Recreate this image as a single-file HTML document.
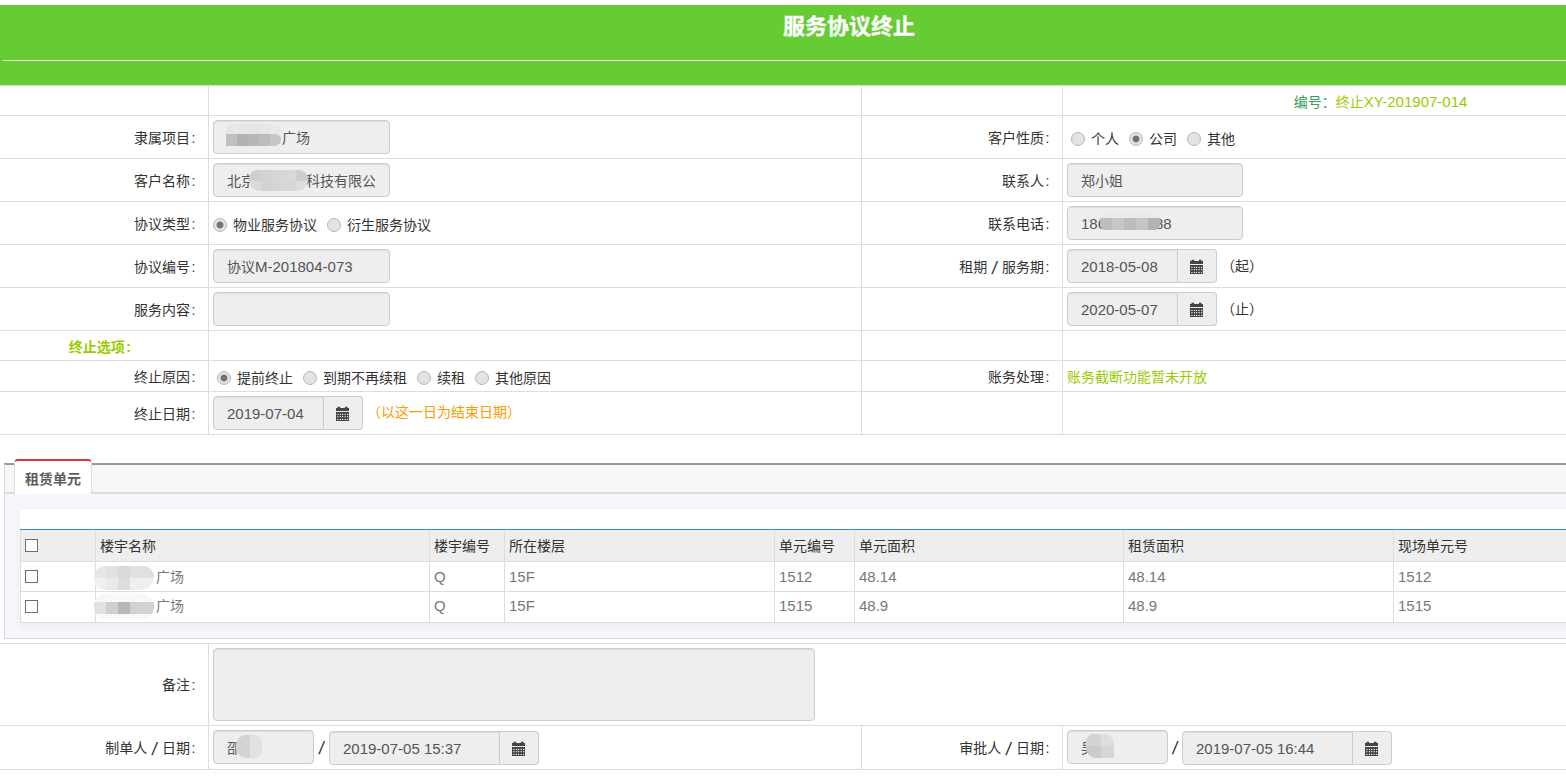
<!DOCTYPE html>
<html lang="zh-CN">
<head>
<meta charset="utf-8">
<title>服务协议终止</title>
<style>
*{box-sizing:border-box;}
html,body{margin:0;padding:0;}
html{overflow:hidden;background:#fff;width:1566px;height:782px;}
body{width:1566px;height:782px;position:relative;overflow:hidden;background:#fff;
  font-family:"Liberation Sans","Noto Sans CJK SC",sans-serif;font-size:14px;line-height:20px;color:#333;}
.page{position:absolute;left:0;top:0;width:1566px;height:782px;overflow:hidden;}
.page>.in{position:absolute;left:0;top:0;width:1698px;height:782px;}
/* header */
.hd{position:absolute;left:0;top:5px;width:1698px;height:80px;background:#66cc33;}
.hd h1{-webkit-text-stroke:0.3px #fff;margin:0;position:absolute;left:0;top:7px;width:100%;text-align:center;font-size:22px;line-height:30px;font-weight:bold;color:#fff;}
.hd .ln{position:absolute;left:3px;right:3px;top:55px;height:1px;background:#eee;}
/* form tables */
table.ft{position:absolute;left:0;border-collapse:separate;border-spacing:0;table-layout:fixed;width:1698px;}
table.ft td{border-top:1px solid #ddd;border-right:1px solid #ddd;padding:4px;vertical-align:middle;height:43px;}
table.ft td:last-child{border-right:0;}
table.ft tr:last-child td{border-bottom:1px solid #ddd;}
table.ft td.lb{text-align:right;padding:5px 12.5px 4px 0;word-spacing:1px;}
table.ft td.lb i{font-style:normal;margin-left:1.5px;}
table.ft tr.s td{height:30px;}
table.ft tr.b td{height:45px;vertical-align:top;}
table.ft tr.b td.lb{vertical-align:middle;}
table.ft tr.b .ig{position:relative;top:1px;}
.ls{display:inline-block;font-size:18px;line-height:14px;position:relative;top:2px;transform:skewX(-8deg);}
table.ft td.rc{padding:7px 4px 3px;}
table.ft td.tc{padding-top:6px;}
.ip{display:inline-block;vertical-align:middle;height:34px;padding:7px 12px 5px 13px;border:1px solid #ccc;border-radius:4px;background:#eee;box-shadow:inset 0 1px 1px rgba(0,0,0,.075);color:#555;font-size:14px;line-height:20px;white-space:nowrap;overflow:hidden;}
.ig{display:inline-flex;vertical-align:middle;height:34px;}
.ig .ip{border-radius:4px 0 0 4px;}
.ig .ad{width:39px;height:34px;border:1px solid #ccc;border-left:0;border-radius:0 4px 4px 0;background:#eee;display:flex;align-items:center;justify-content:center;}
.ig .ad svg{display:block;margin-top:1px;}
.rd{display:inline-block;vertical-align:top;margin-top:3px;width:14px;height:14px;margin-right:6px;border-radius:50%;border:1px solid #b6b6b6;background:#e3e3e3;position:relative;}
.rd.on{background:radial-gradient(circle at 50% 50%,#747474 0,#747474 3px,#e3e3e3 3.9px);}
.rl{display:inline-block;vertical-align:middle;margin-right:10px;height:20px;line-height:20px;}
.rc .rl{vertical-align:top;}
.n,.ip.n,.gr td.n{font-size:15px;}
.sl{display:inline-block;vertical-align:top;margin-top:8px;width:15px;text-align:center;font-size:18px;line-height:20px;transform:skewX(-8deg);}
.pr{margin-left:4px;}
.g1{color:#35a064;}
.g2{color:#99cc00;}
.or{color:#ff9900;position:relative;top:-1px;}
.gap{display:inline-block;height:1px;vertical-align:middle;}
.cl{display:block;overflow:hidden;white-space:nowrap;}
.mz{position:absolute;overflow:hidden;}
.mz b{display:block;}
/* tabs */
.tb{position:absolute;left:4px;top:463px;width:1690px;height:176px;border:1px solid #ddd;border-top:2px solid #999;background:#f6f7fb;}
.tb .st{position:absolute;left:0;top:0;right:0;height:29px;background:#f7f7f7;border-bottom:2px solid #ddd;}
.tb .tab{position:absolute;left:9px;top:-6px;width:78px;height:35px;background:#fff;border:1px solid #ddd;border-top:2px solid #e23232;border-bottom:0;border-radius:4px 4px 0 0;text-align:center;font-weight:bold;color:#5c5c5c;line-height:20px;padding-top:8px;}
.gr{position:absolute;left:15px;top:44px;width:1658px;height:114px;background:#fff;box-shadow:0 3px 8px 1px rgba(0,0,0,.04);}
.gr table{position:absolute;left:0;top:20px;width:1658px;border-collapse:separate;border-spacing:0;table-layout:fixed;border-top:1px solid #3a87d2;}
.gr td,.gr th{height:30px;border-left:1px solid #ddd;border-bottom:1px solid #ddd;padding:0 0 0 4px;text-align:left;font-weight:normal;vertical-align:middle;color:#777;white-space:nowrap;overflow:hidden;}
.gr th{background:#eee;color:#333;height:32px;}
.gr tr.l td{height:31px;padding-bottom:2px;}
.cb{display:block;width:13px;height:13px;border:1px solid #6e6e6e;background:#fff;}
</style>
</head>
<body>
<div class="page"><div class="in">
<div class="hd"><h1>服务协议终止</h1><div class="ln"></div></div>

<table class="ft" style="top:85px">
<colgroup><col style="width:209px"><col style="width:653px"><col style="width:201px"><col></colgroup>
<tr class="s"><td></td><td></td><td></td><td style="text-align:center;padding:6px 4px 3px"><span class="g1">编号：</span><span class="g2">终止<span class="n">XY-201907-014</span></span></td></tr>
<tr><td class="lb">隶属项目<i>:</i></td><td><span class="ip" style="width:177px"><span class="gap" style="width:55px"></span>广场</span></td><td class="lb">客户性质<i>:</i></td><td class="rc"><span class="rd" style="margin-left:4px"></span><span class="rl">个人</span><span class="rd on"></span><span class="rl">公司</span><span class="rd"></span><span class="rl">其他</span></td></tr>
<tr><td class="lb">客户名称<i>:</i></td><td><span class="ip" style="width:177px"><span class="cl" style="width:148px">北京<span class="gap" style="width:51px"></span>科技有限公司</span></span></td><td class="lb">联系人<i>:</i></td><td><span class="ip" style="width:176px">郑小姐</span></td></tr>
<tr><td class="lb">协议类型<i>:</i></td><td class="rc"><span class="rd on"></span><span class="rl">物业服务协议</span><span class="rd"></span><span class="rl">衍生服务协议</span></td><td class="lb">联系电话<i>:</i></td><td><span class="ip n" style="width:176px">186<span class="gap" style="width:49px"></span>88</span></td></tr>
<tr><td class="lb">协议编号<i>:</i></td><td><span class="ip" style="width:177px">协议<span class="n">M-201804-073</span></span></td><td class="lb">租期 <span class="ls">/</span> 服务期<i>:</i></td><td><span class="ig"><span class="ip n" style="width:111px">2018-05-08</span><span class="ad"><svg width="14" height="15" viewBox="0 0 14 15"><path fill="#444" d="M0 2h13v3H0z M1.5 0.8h2.6v1.4H1.5z M8.9 0.8h2.6v1.4H8.9z M0 5.9h13V15H0z"/><g fill="#f4f4f4"><rect x="1.3" y="7.9" width="1.2" height="1.1"/><rect x="3.9" y="7.9" width="1.2" height="1.1"/><rect x="6.0" y="7.9" width="1.2" height="1.1"/><rect x="8.6" y="7.9" width="1.2" height="1.1"/><rect x="11.0" y="7.9" width="1.2" height="1.1"/><rect x="1.3" y="10.1" width="1.2" height="1.1"/><rect x="3.9" y="10.1" width="1.2" height="1.1"/><rect x="6.0" y="10.1" width="1.2" height="1.1"/><rect x="8.6" y="10.1" width="1.2" height="1.1"/><rect x="11.0" y="10.1" width="1.2" height="1.1"/><rect x="1.3" y="12.9" width="1.2" height="1.1"/><rect x="3.9" y="12.9" width="1.2" height="1.1"/><rect x="6.0" y="12.9" width="1.2" height="1.1"/><rect x="8.6" y="12.9" width="1.2" height="1.1"/><rect x="11.0" y="12.9" width="1.2" height="1.1"/></g></svg></span></span><span class="rl pr">（起）</span></td></tr>
<tr><td class="lb">服务内容<i>:</i></td><td><span class="ip" style="width:177px"></span></td><td></td><td><span class="ig"><span class="ip n" style="width:111px">2020-05-07</span><span class="ad"><svg width="14" height="15" viewBox="0 0 14 15"><path fill="#444" d="M0 2h13v3H0z M1.5 0.8h2.6v1.4H1.5z M8.9 0.8h2.6v1.4H8.9z M0 5.9h13V15H0z"/><g fill="#f4f4f4"><rect x="1.3" y="7.9" width="1.2" height="1.1"/><rect x="3.9" y="7.9" width="1.2" height="1.1"/><rect x="6.0" y="7.9" width="1.2" height="1.1"/><rect x="8.6" y="7.9" width="1.2" height="1.1"/><rect x="11.0" y="7.9" width="1.2" height="1.1"/><rect x="1.3" y="10.1" width="1.2" height="1.1"/><rect x="3.9" y="10.1" width="1.2" height="1.1"/><rect x="6.0" y="10.1" width="1.2" height="1.1"/><rect x="8.6" y="10.1" width="1.2" height="1.1"/><rect x="11.0" y="10.1" width="1.2" height="1.1"/><rect x="1.3" y="12.9" width="1.2" height="1.1"/><rect x="3.9" y="12.9" width="1.2" height="1.1"/><rect x="6.0" y="12.9" width="1.2" height="1.1"/><rect x="8.6" y="12.9" width="1.2" height="1.1"/><rect x="11.0" y="12.9" width="1.2" height="1.1"/></g></svg></span></span><span class="rl pr">（止）</span></td></tr>
<tr class="s"><td class="lb" style="padding:6px 77px 3px 0"><b class="g2">终止选项<i>:</i></b></td><td></td><td></td><td></td></tr>
<tr class="s" style="height:31px"><td class="lb" style="height:31px">终止原因<i>:</i></td><td class="rc"><span class="rd on" style="margin-left:4px"></span><span class="rl">提前终止</span><span class="rd"></span><span class="rl">到期不再续租</span><span class="rd"></span><span class="rl">续租</span><span class="rd"></span><span class="rl">其他原因</span></td><td class="lb">账务处理<i>:</i></td><td class="tc"><span class="g2">账务截断功能暂未开放</span></td></tr>
<tr><td class="lb">终止日期<i>:</i></td><td><span class="ig"><span class="ip n" style="width:111px">2019-07-04</span><span class="ad"><svg width="14" height="15" viewBox="0 0 14 15"><path fill="#444" d="M0 2h13v3H0z M1.5 0.8h2.6v1.4H1.5z M8.9 0.8h2.6v1.4H8.9z M0 5.9h13V15H0z"/><g fill="#f4f4f4"><rect x="1.3" y="7.9" width="1.2" height="1.1"/><rect x="3.9" y="7.9" width="1.2" height="1.1"/><rect x="6.0" y="7.9" width="1.2" height="1.1"/><rect x="8.6" y="7.9" width="1.2" height="1.1"/><rect x="11.0" y="7.9" width="1.2" height="1.1"/><rect x="1.3" y="10.1" width="1.2" height="1.1"/><rect x="3.9" y="10.1" width="1.2" height="1.1"/><rect x="6.0" y="10.1" width="1.2" height="1.1"/><rect x="8.6" y="10.1" width="1.2" height="1.1"/><rect x="11.0" y="10.1" width="1.2" height="1.1"/><rect x="1.3" y="12.9" width="1.2" height="1.1"/><rect x="3.9" y="12.9" width="1.2" height="1.1"/><rect x="6.0" y="12.9" width="1.2" height="1.1"/><rect x="8.6" y="12.9" width="1.2" height="1.1"/><rect x="11.0" y="12.9" width="1.2" height="1.1"/></g></svg></span></span><span class="rl pr or">（以这一日为结束日期）</span></td><td></td><td></td></tr>
</table>

<div class="tb">
  <div class="st"></div>
  <div class="tab">租赁单元</div>
  <div class="gr">
    <table>
      <colgroup><col style="width:75px"><col style="width:334px"><col style="width:75px"><col style="width:270px"><col style="width:80px"><col style="width:269px"><col style="width:270px"><col></colgroup>
      <tr><th><span class="cb"></span></th><th>楼宇名称</th><th>楼宇编号</th><th>所在楼层</th><th>单元编号</th><th>单元面积</th><th>租赁面积</th><th>现场单元号</th></tr>
      <tr><td><span class="cb"></span></td><td><span class="gap" style="width:56px"></span>广场</td><td class="n">Q</td><td class="n">15F</td><td class="n">1512</td><td class="n">48.14</td><td class="n">48.14</td><td class="n">1512</td></tr>
      <tr class="l"><td><span class="cb"></span></td><td><span class="gap" style="width:56px"></span>广场</td><td class="n">Q</td><td class="n">15F</td><td class="n">1515</td><td class="n">48.9</td><td class="n">48.9</td><td class="n">1515</td></tr>
    </table>
  </div>
</div>

<table class="ft" style="top:643px">
<colgroup><col style="width:209px"><col style="width:653px"><col style="width:201px"><col></colgroup>
<tr><td class="lb" style="height:82px">备注<i>:</i></td><td colspan="3"><span class="ip" style="width:602px;height:73px;display:block"></span></td></tr>
<tr class="b"><td class="lb">制单人 <span class="ls">/</span> 日期<i>:</i></td><td><span class="ip" style="width:101px">邵</span><span class="sl">/</span><span class="ig"><span class="ip n" style="width:171px">2019-07-05 15:37</span><span class="ad"><svg width="14" height="15" viewBox="0 0 14 15"><path fill="#444" d="M0 2h13v3H0z M1.5 0.8h2.6v1.4H1.5z M8.9 0.8h2.6v1.4H8.9z M0 5.9h13V15H0z"/><g fill="#f4f4f4"><rect x="1.3" y="7.9" width="1.2" height="1.1"/><rect x="3.9" y="7.9" width="1.2" height="1.1"/><rect x="6.0" y="7.9" width="1.2" height="1.1"/><rect x="8.6" y="7.9" width="1.2" height="1.1"/><rect x="11.0" y="7.9" width="1.2" height="1.1"/><rect x="1.3" y="10.1" width="1.2" height="1.1"/><rect x="3.9" y="10.1" width="1.2" height="1.1"/><rect x="6.0" y="10.1" width="1.2" height="1.1"/><rect x="8.6" y="10.1" width="1.2" height="1.1"/><rect x="11.0" y="10.1" width="1.2" height="1.1"/><rect x="1.3" y="12.9" width="1.2" height="1.1"/><rect x="3.9" y="12.9" width="1.2" height="1.1"/><rect x="6.0" y="12.9" width="1.2" height="1.1"/><rect x="8.6" y="12.9" width="1.2" height="1.1"/><rect x="11.0" y="12.9" width="1.2" height="1.1"/></g></svg></span></span></td><td class="lb">审批人 <span class="ls">/</span> 日期<i>:</i></td><td><span class="ip" style="width:101px">吴</span><span class="sl" style="width:14px">/</span><span class="ig"><span class="ip n" style="width:171px">2019-07-05 16:44</span><span class="ad"><svg width="14" height="15" viewBox="0 0 14 15"><path fill="#444" d="M0 2h13v3H0z M1.5 0.8h2.6v1.4H1.5z M8.9 0.8h2.6v1.4H8.9z M0 5.9h13V15H0z"/><g fill="#f4f4f4"><rect x="1.3" y="7.9" width="1.2" height="1.1"/><rect x="3.9" y="7.9" width="1.2" height="1.1"/><rect x="6.0" y="7.9" width="1.2" height="1.1"/><rect x="8.6" y="7.9" width="1.2" height="1.1"/><rect x="11.0" y="7.9" width="1.2" height="1.1"/><rect x="1.3" y="10.1" width="1.2" height="1.1"/><rect x="3.9" y="10.1" width="1.2" height="1.1"/><rect x="6.0" y="10.1" width="1.2" height="1.1"/><rect x="8.6" y="10.1" width="1.2" height="1.1"/><rect x="11.0" y="10.1" width="1.2" height="1.1"/><rect x="1.3" y="12.9" width="1.2" height="1.1"/><rect x="3.9" y="12.9" width="1.2" height="1.1"/><rect x="6.0" y="12.9" width="1.2" height="1.1"/><rect x="8.6" y="12.9" width="1.2" height="1.1"/><rect x="11.0" y="12.9" width="1.2" height="1.1"/></g></svg></span></span></td></tr>
</table>
<!-- privacy mosaic patches that are part of the screenshot -->
<div class="mz" style="left:226px;top:124px;width:56px;height:10px;border-radius:14px 26px 0 0"><b style="height:10px;background:linear-gradient(90deg,#e7e7e7 0px,#e7e7e7 11px,#e5e6e6 11px,#e5e6e6 22px,#e4e5e5 22px,#e4e5e5 34px,#e6e7e7 34px,#e6e7e7 45px,#e9e9e9 45px,#e9e9e9 56px)"></b></div>
<div class="mz" style="left:226px;top:134px;width:55px;height:12px;border-radius:0 6px 8px 0"><b style="height:12px;background:linear-gradient(90deg,#c2c0be 0px,#c2c0be 11px,#b1b1b1 11px,#b1b1b1 22px,#b5b6b6 22px,#b5b6b6 33px,#bcbcbc 33px,#bcbcbc 44px,#c8c5c3 44px,#c8c5c3 55px)"></b></div>
<div class="mz" style="left:249px;top:170px;width:59px;height:21px;border-radius:9px 10px 12px 12px"><b style="height:11px;background:linear-gradient(90deg,#d0cfcd 0px,#d0cfcd 12px,#d2d3d5 12px,#d2d3d5 24px,#d6d6d6 24px,#d6d6d6 35px,#d7d8d8 35px,#d7d8d8 47px,#cecdcc 47px,#cecdcc 59px)"></b><b style="height:10px;background:linear-gradient(90deg,#dadad9 0px,#dadad9 12px,#d2d3d5 12px,#d2d3d5 24px,#d6d6d6 24px,#d6d6d6 35px,#d6d6d6 35px,#d6d6d6 47px,#dcdcdc 47px,#dcdcdc 59px)"></b></div>
<div class="mz" style="left:1100px;top:212px;width:58px;height:6px;border-radius:14px 14px 0 0"><b style="height:6px;background:#ebebeb"></b></div>
<div class="mz" style="left:1100px;top:218px;width:60px;height:12px;border-radius:0 0 5px 5px"><b style="height:12px;background:linear-gradient(90deg,#bcbdbd 0px,#bcbdbd 12px,#c9c7c6 12px,#c9c7c6 24px,#bbbcbc 24px,#bbbcbc 36px,#c6c5c3 36px,#c6c5c3 48px,#b4b4b4 48px,#b4b4b4 60px)"></b></div>
<div class="mz" style="left:94px;top:566px;width:60px;height:24px;border-radius:12px 12px 14px 12px"><b style="height:12px;background:linear-gradient(90deg,#e8e7e4 0px,#e8e7e4 12px,#e0e1e3 12px,#e0e1e3 24px,#d9d9d9 24px,#d9d9d9 36px,#e0e1e1 36px,#e0e1e1 48px,#dfdfdf 48px,#dfdfdf 60px)"></b><b style="height:12px;background:linear-gradient(90deg,#f0f0ef 0px,#f0f0ef 12px,#e9e9e9 12px,#e9e9e9 24px,#dddddd 24px,#dddddd 36px,#eeefef 36px,#eeefef 48px,#f0f0f0 48px,#f0f0f0 60px)"></b></div>
<div class="mz" style="left:94px;top:593px;width:60px;height:26px;border-radius:12px"><b style="height:9px;background:linear-gradient(90deg,#f7f7f7 0px,#f7f7f7 12px,#f9f9f9 12px,#f9f9f9 24px,#f9f9f9 24px,#f9f9f9 36px,#f9f9f9 36px,#f9f9f9 48px,#f8f8f8 48px,#f8f8f8 60px)"></b><b style="height:12px;background:linear-gradient(90deg,#e2e1de 0px,#e2e1de 12px,#cdced0 12px,#cdced0 24px,#b8b8ba 24px,#b8b8ba 36px,#d0d1d3 36px,#d0d1d3 48px,#d3d3d3 48px,#d3d3d3 60px)"></b><b style="height:5px;background:#f8f8f8"></b></div>
<div class="mz" style="left:236px;top:735px;width:26px;height:23px;border-radius:10px 8px 8px 10px"><b style="height:23px;background:linear-gradient(90deg,#d3d3d3 0px,#d3d3d3 14px,#e0e1e3 14px,#e0e1e3 26px)"></b></div>
<div class="mz" style="left:1086px;top:734px;width:28px;height:24px;border-radius:8px 10px 2px 10px"><b style="height:12px;background:linear-gradient(90deg,#d4d4d4 0px,#d4d4d4 15px,#dcdddf 15px,#dcdddf 28px)"></b><b style="height:12px;background:linear-gradient(90deg,#cbcbcb 0px,#cbcbcb 15px,#d5d6d8 15px,#d5d6d8 28px)"></b></div>
</div></div>
</body>
</html>
